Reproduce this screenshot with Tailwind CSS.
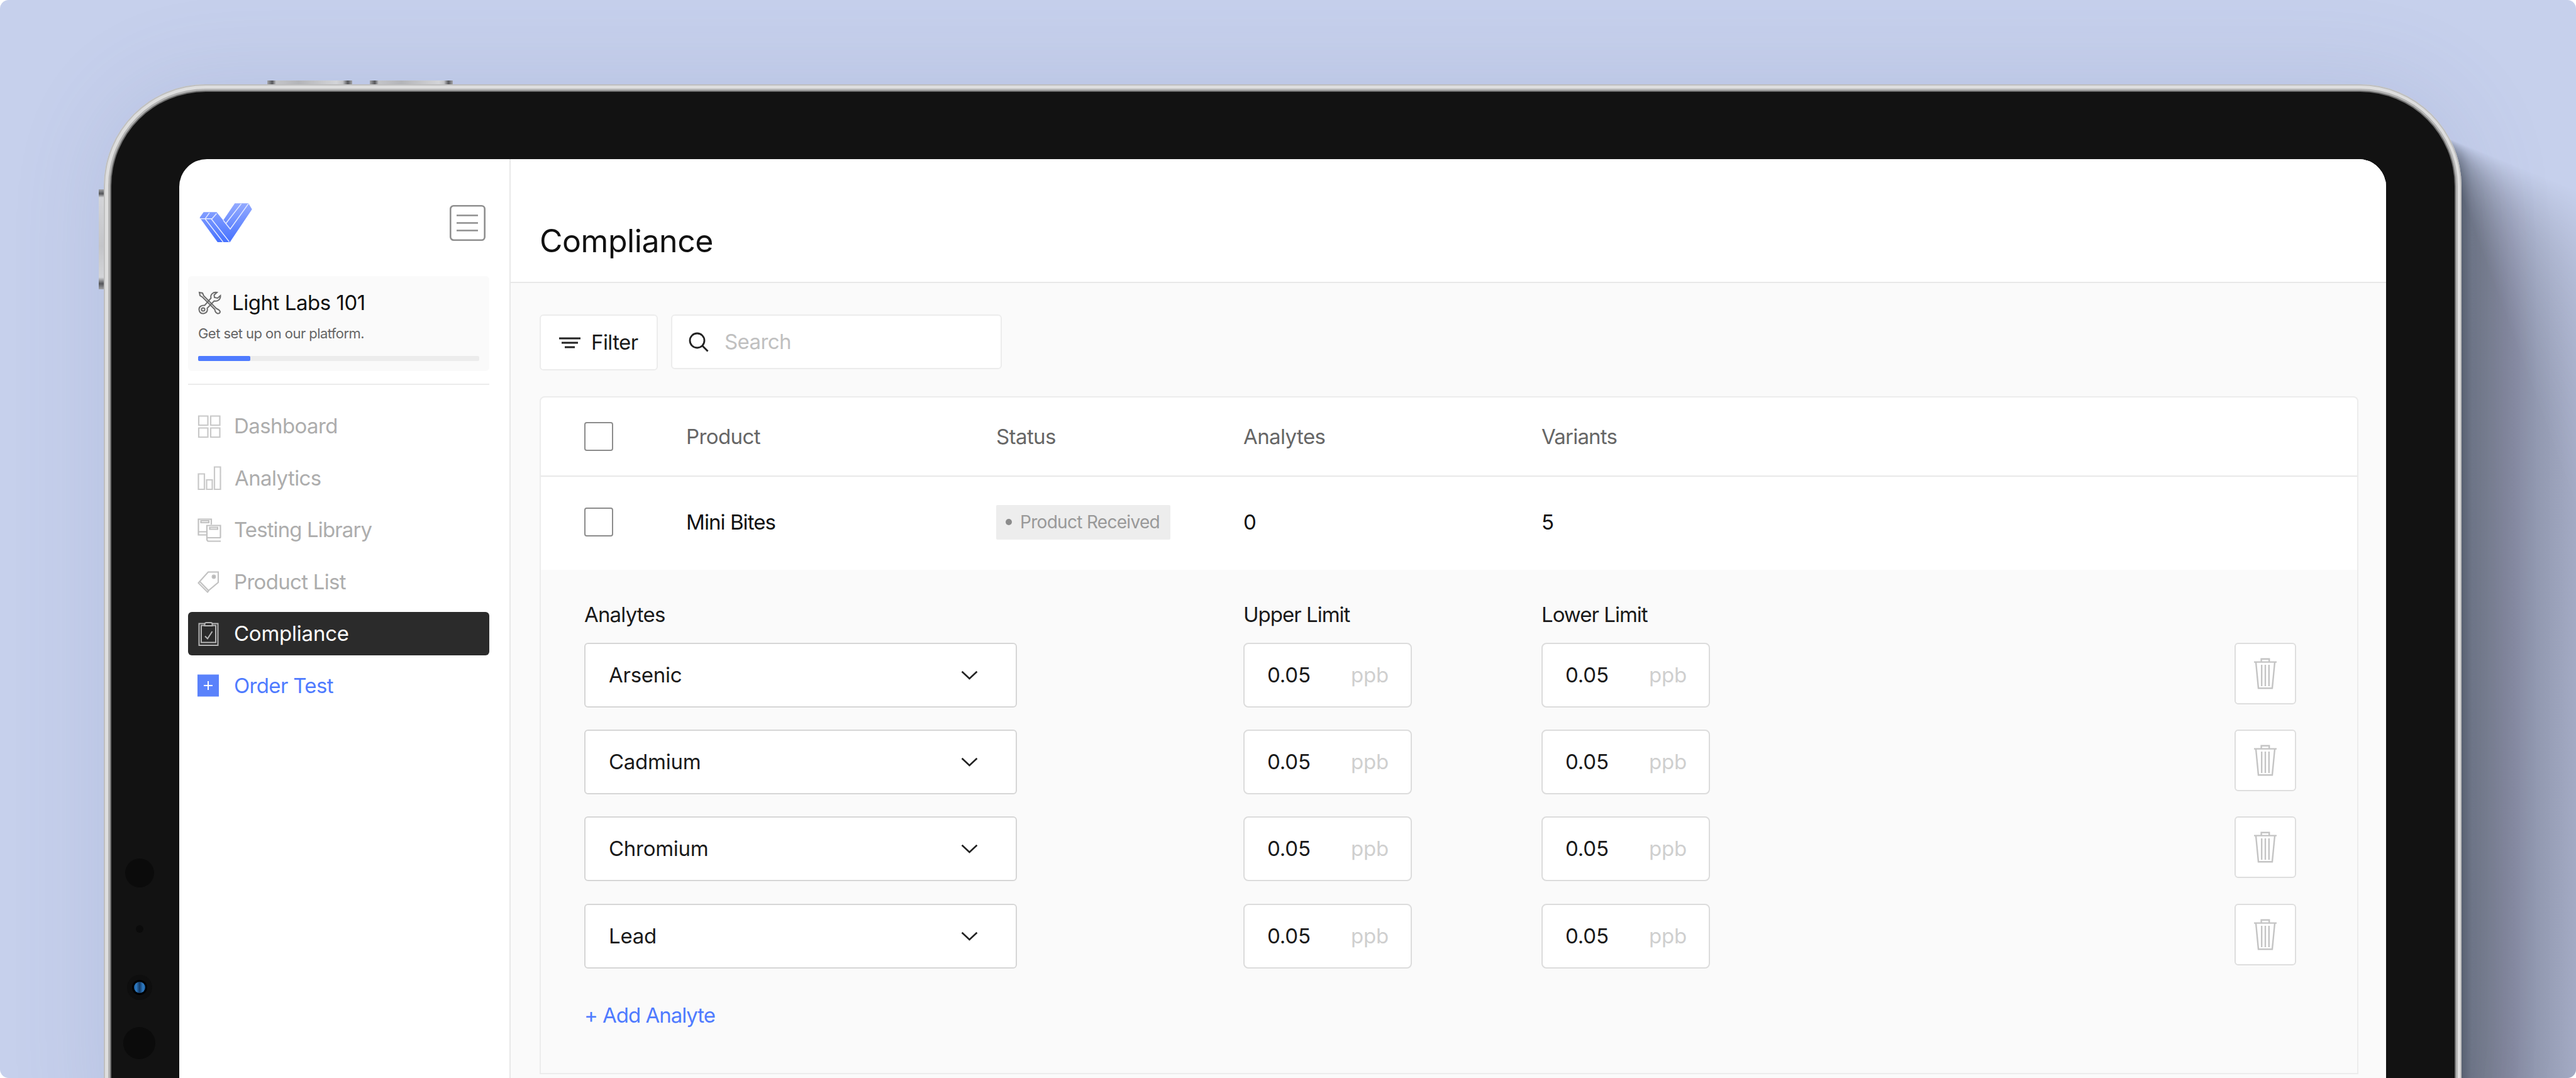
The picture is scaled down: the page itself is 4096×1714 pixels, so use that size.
<!DOCTYPE html>
<html lang="en">

<head>
  <meta charset="UTF-8" />
  <meta name="viewport" content="width=device-width, initial-scale=1.0" />
  <title>Light Labs - Compliance</title>
  <script src="https://cdn.jsdelivr.net/npm/@tailwindcss/browser@4"></script>
</head>

<body class="bg-white">

  <!-- Icons -->
  <svg class="hidden">
    <symbol id="icon-chevron" viewBox="0 0 26 14">
      <path d="M1.5 1.5 13 12.3 24.5 1.5" fill="none" stroke="currentColor" stroke-width="2.6" />
    </symbol>
    <symbol id="icon-trash" viewBox="0 0 36 50">
      <g fill="none" stroke="currentColor" stroke-width="2.4">
        <path d="M0 6.6h36M11.6 6V1.8h12.6V6M3 7l4 41.2h22L33 7" />
        <path d="M12.2 11v34M18 11v34M23.8 11v34" />
      </g>
    </symbol>
  </svg>

  <div class="relative w-[4096px] h-[1714px] overflow-hidden rounded-[14px] bg-[#c6d0ec] pt-[134px] pl-[165px] font-['Inter',sans-serif] text-[33px] leading-none tracking-[-0.018em] text-[#1a1a1a]">

    <!-- Shadow cast to the right of the tablet -->
    <div class="absolute left-[3880px] top-[215px] w-[216px] h-[1499px] bg-[linear-gradient(90deg,#59616f_0,#59616f_34px,#6f7686_50px,#777d8e_74px,#8589a0_115px,#9299b0_150px,#a3aac4_216px)] [mask-image:conic-gradient(from_0deg_at_0_0,transparent_112deg,#0008_136deg,#000_160deg,#000_180deg)]"></div>

    <!-- Hardware buttons -->
    <div class="absolute left-[425px] top-[128px] w-[135px] h-[8px] bg-[linear-gradient(90deg,#aaa_0,#555_8px,#ccc_14px,#bbb_50px,#ddd_110px,#ccc_120px,#555_128px,#aaa)]"></div>
    <div class="absolute left-[588px] top-[128px] w-[132px] h-[8px] bg-[linear-gradient(90deg,#aaa_0,#555_8px,#ccc_14px,#bbb_50px,#ddd_110px,#ccc_118px,#555_125px,#aaa)]"></div>
    <div class="absolute left-[157px] top-[301px] w-[10px] h-[159px] bg-[linear-gradient(180deg,#aaa_0,#555_7px,#ddd_13px,#ccc_90px,#ddd_140px,#555_150px,#aaa)]"></div>

    <!-- Tablet -->
    <div class="relative w-[3749px] h-[1760px] rounded-[162px] bg-[#dedede] p-[12px] pr-[11px] shadow-[0_0_150px_#5a649826,inset_0_0_0_2px_#bfbfbf]">
      <div class="relative h-full rounded-[150px] bg-[#121212] pt-[107px] pl-[108px] shadow-[0_0_0_2px_#6f6f6f,0_0_0_5px_#b4b4b4]">

        <!-- Camera and sensors -->
        <div class="absolute left-[22px] top-[1219px] size-[46px] rounded-full bg-[#0b0b0b]"></div>
        <div class="absolute left-[39px] top-[1325px] size-[12px] rounded-full bg-[#0b0b0b]"></div>
        <div class="absolute left-[25px] top-[1404px] size-[40px] rounded-full bg-[#0e0e0e] p-[8px]">
          <div class="size-[24px] rounded-full bg-black p-[3px]">
            <div class="size-[18px] rounded-full bg-[linear-gradient(90deg,#1c5c9c_0,#2f7cc4_20%,#143a66_50%,#2f7cc4_80%,#1c5c9c)]"></div>
          </div>
        </div>
        <div class="absolute left-[19px] top-[1487px] size-[51px] rounded-full bg-[#0b0b0b]"></div>

        <!-- Screen -->
        <div class="flex w-[3509px] h-[1600px] overflow-hidden rounded-[44px] bg-white">

          <!-- Sidebar -->
          <aside class="w-[527px] shrink-0 border-r-2 border-[#e8e8e8] pl-[14px] pr-[32px] pt-[70px]">
            <div class="flex h-[62px] items-center justify-between pl-[18px] pr-[6px]">
              <svg class="w-[84px] h-[64px]" viewBox="0 0 325 245">
                <defs>
                  <linearGradient id="logo" x1="0" y1="0" x2="0" y2="1">
                    <stop offset="0" stop-color="#93aaff" />
                    <stop offset="1" stop-color="#4772ff" />
                  </linearGradient>
                </defs>
                <path d="M2 92 26 58H106L147 108 218 4H302L324 40 188 242H112Z" fill="url(#logo)" />
                <path d="M2 98H78L106 66M36 98 62 62M36 100 146 242M74 100 184 240M147 108 190 162 302 6M164 126 258 6" fill="none" stroke="#e4eaff" stroke-width="6" />
              </svg>
              <svg class="size-[57px]" viewBox="0 0 57 57" fill="none" stroke="#8f8f8f" stroke-width="2.6">
                <rect x="1.3" y="1.3" width="54.4" height="54.4" rx="5" />
                <path d="M11 16.5h34M11 28.5h34M11 40.5h34" />
              </svg>
            </div>

            <div class="mt-[54px] h-[151px] rounded-[6px] bg-[#fafafa] px-[16px] pt-[23px]">
              <div class="flex h-[38px] items-center">
                <svg class="size-[37px]" viewBox="0 0 37 37" fill="none" stroke="#6b6b6b" stroke-width="2">
                  <path d="M2 2 7 3 9 7.5 29 27.5Q35 30 35 33 34 36 31 35.5 27 34 26.5 29L7 9.5 3 7Z" />
                  <path d="M30 2C24 1 19 5 20.5 11L10.5 22.5C5 22 1 25 1.5 29.5 2 34 5 36 9 35.5 14 34.5 15.5 31 14.5 27L25.5 15.5C31 17 36 13 35.5 7L31 11 26 10 25.5 6Z" />
                  <circle cx="8" cy="29" r="2.6" />
                </svg>
                <span class="ml-[17px] whitespace-nowrap tracking-[-0.014em] text-[#111]">Light Labs 101</span>
              </div>
              <div class="mt-[18px] flex h-[24px] items-center text-[22px] tracking-[-0.025em] text-[#666]"><span class="whitespace-nowrap">Get set up on our platform.</span></div>
              <div class="mt-[24px] h-[8px] rounded-[2px] bg-[#ececec]">
                <div class="h-full w-[83px] rounded-[2px] bg-[#4f7bff]"></div>
              </div>
            </div>

            <div class="mt-[20px] h-[2px] bg-[#ececec]"></div>

            <nav class="mt-[31px] flex flex-col gap-[13.6px] text-[#adadad]">
              <a class="flex h-[69px] items-center pl-[15px]">
                <svg class="size-[38px]" viewBox="0 0 38 38" fill="none" stroke="#c9c9c9" stroke-width="2.2">
                  <path d="M2 2.5h14.5V17H2ZM21 2.5h14.5V17H21ZM2 21.5h14.5V36H2ZM21 21.5h14.5V36H21Z" />
                </svg>
                <span class="ml-[20px] whitespace-nowrap">Dashboard</span>
              </a>
              <a class="flex h-[69px] items-center pl-[15px]">
                <svg class="size-[38px]" viewBox="0 0 38 38" fill="none" stroke="#c9c9c9" stroke-width="2.2">
                  <path d="M1.5 12.5h9.5V37H1.5ZM14.5 22h9V37h-9ZM27 1.5h9.5V37H27Z" />
                </svg>
                <span class="ml-[21px] whitespace-nowrap">Analytics</span>
              </a>
              <a class="flex h-[69px] items-center pl-[15px]">
                <svg class="size-[38px]" viewBox="0 0 38 38" fill="none" stroke="#c2c2c2" stroke-width="2.2">
                  <path d="M15 26.5H1.5V1.5H22V10M1.5 21.5H15M5.5 4h12.5v3H5.5Z" />
                  <path d="M37 36.5H17Q15 36 15 33V11.5H36.5V31M15.5 31H37M19.5 14.5h12.5v3H19.5Z" />
                </svg>
                <span class="ml-[20px] whitespace-nowrap tracking-[-0.027em]">Testing Library</span>
              </a>
              <a class="flex h-[69px] items-center pl-[15px]">
                <svg class="size-[38px]" viewBox="0 0 38 38" fill="none" stroke="#c2c2c2" stroke-width="2.1">
                  <path d="M17 3.5H33V20L17.5 33 3.5 18.5ZM3.5 18.5 1.5 21 16 35.5 18 33" />
                  <circle cx="26" cy="11" r="2.4" fill="#b5b5b5" />
                </svg>
                <span class="ml-[20px] whitespace-nowrap tracking-[-0.021em]">Product List</span>
              </a>
              <a class="flex h-[69px] items-center rounded-[6px] bg-[#2b2b2b] pl-[15px] text-white">
                <svg class="size-[38px]" viewBox="0 0 38 38" fill="none" stroke="#b5b5b5" stroke-width="2">
                  <path d="M11 2.5H2.5V37H32.5V2.5H24M11.5 5.5H6V32.5H29V5.5H23.5M11.5 6V3Q12 1 14 1H21Q23.5 1 23.5 3V6Z" />
                  <path d="M12 22.5 16 26.5 23.5 15" />
                </svg>
                <span class="ml-[20px] whitespace-nowrap tracking-[-0.007em]">Compliance</span>
              </a>
              <a class="flex h-[69px] items-center pl-[15px] text-[#4f7bff]">
                <svg class="size-[38px]" viewBox="0 0 38 38" stroke="#fff" stroke-width="2">
                  <rect x="0" y="1.5" width="34" height="35" fill="#5a82fb" stroke="none" />
                  <path d="M10 19h14M17 12v14" />
                </svg>
                <span class="ml-[20px] whitespace-nowrap tracking-[-0.02em]">Order Test</span>
              </a>
            </nav>
          </aside>

          <!-- Main -->
          <main class="flex-1 bg-[#fafafa]">
            <header class="flex h-[197px] items-center border-b-2 border-[#e8e8e8] bg-white pl-[46px] pt-[65px] text-[50px] text-[#111]">
              <h1 class="whitespace-nowrap tracking-[-0.009em]">Compliance</h1>
            </header>

            <div class="flex items-start gap-[21px] pl-[46px] pt-[50px]">
              <button class="flex h-[89px] w-[188px] items-center rounded-[6px] border-2 border-[#ececec] bg-white pl-[29px] tracking-[-0.018em]">
                <svg class="h-[20px] w-[34px]" viewBox="0 0 34 20" stroke="#222" stroke-width="3">
                  <path d="M0 3h34M4 10h26M9 17h16" />
                </svg>
                <span class="ml-[17px] whitespace-nowrap">Filter</span>
              </button>
              <div class="flex h-[87px] w-[526px] items-center rounded-[6px] border-2 border-[#ececec] bg-white pl-[26px] text-[#c0c0c0]">
                <svg class="size-[32px]" viewBox="0 0 32 32" fill="none" stroke="#222" stroke-width="2.8">
                  <circle cx="13.5" cy="13.5" r="11.5" />
                  <path d="M21.5 21.5 30.5 30.5" />
                </svg>
                <span class="ml-[25px] whitespace-nowrap">Search</span>
              </div>
            </div>

            <!-- Product table -->
            <section class="ml-[46px] mt-[41px] w-[2892px] rounded-t-[8px] border-2 border-b-0 border-[#ececec] bg-white">
              <div class="flex h-[126px] items-center border-b-2 border-[#e8e8e8] pl-[69px] text-[#666]">
                <div class="w-[162px]"><div class="size-[46px] rounded-[4px] border-[2.5px] border-[#8c8c8c]"></div></div>
                <div class="w-[493px]">Product</div>
                <div class="w-[393px]">Status</div>
                <div class="w-[474px]">Analytes</div>
                <div class="tracking-[-0.024em]">Variants</div>
              </div>
              <div class="flex h-[148px] items-center pb-[4px] pl-[69px] text-[#111]">
                <div class="w-[162px]"><div class="size-[46px] rounded-[4px] border-[2.5px] border-[#8c8c8c]"></div></div>
                <div class="w-[493px] tracking-[-0.028em]">Mini Bites</div>
                <div class="w-[393px]">
                  <div class="flex h-[55px] w-[277px] items-center rounded-[2px] bg-[#ededed] pl-[15px] text-[28px] tracking-[-0.025em] text-[#999]">
                    <div class="mr-[13px] size-[10px] rounded-full bg-[#8c8c8c]"></div>
                    <span class="whitespace-nowrap">Product Received</span>
                  </div>
                </div>
                <div class="w-[474px]">0</div>
                <div>5</div>
              </div>

              <!-- Limits of the opened product -->
              <div class="h-[802px] border-b-2 border-[#ececec] bg-[#fafafa] pl-[69px] pt-[54px]">
                <div class="flex h-[34px] items-center">
                  <div class="w-[1048px] tracking-[-0.025em]">Analytes</div>
                  <div class="w-[474px] tracking-[-0.03em]">Upper Limit</div>
                  <div class="tracking-[-0.03em]">Lower Limit</div>
                </div>
                <div id="analytes" class="mt-[28px] flex flex-col gap-[35.2px]"></div>
                <div class="mt-[58px] tracking-[-0.031em] text-[#4f7bff]">+ Add Analyte</div>
              </div>
            </section>
          </main>
        </div>
      </div>
    </div>
  </div>

  <script>
    const analytes = [
      { name: "Arsenic", upper: "0.05", lower: "0.05" },
      { name: "Cadmium", upper: "0.05", lower: "0.05" },
      { name: "Chromium", upper: "0.05", lower: "0.05" },
      { name: "Lead", upper: "0.05", lower: "0.05" }
    ];

    function limit(value) {
      return `
        <div class="flex h-[103px] w-[268px] items-center justify-between rounded-[8px] border-2 border-[#dcdcdc] bg-white pl-[36px] pr-[35px] tracking-[-0.005em]">
          <span>${value}</span>
          <span class="text-[#cfcfcf]">ppb</span>
        </div>`;
    }

    document.getElementById("analytes").innerHTML = analytes.map(a => `
      <div class="flex h-[103px] items-start">
        <div class="mr-[360px] flex h-[103px] w-[688px] items-center justify-between rounded-[6px] border-2 border-[#d6d6d6] bg-white pl-[37px] pr-[60px] tracking-[-0.008em]">
          <span>${a.name}</span>
          <svg class="w-[27px] h-[15px] text-[#222]"><use href="#icon-chevron" /></svg>
        </div>
        <div class="w-[474px]">${limit(a.upper)}</div>
        <div class="w-[1102px]">${limit(a.lower)}</div>
        <div class="flex h-[98px] w-[98px] items-center justify-center rounded-[6px] border-2 border-[#dedede] bg-white text-[#c4c4c4]">
          <svg class="h-[50px] w-[36px]"><use href="#icon-trash" /></svg>
        </div>
      </div>`).join("");
  </script>
</body>

</html>
